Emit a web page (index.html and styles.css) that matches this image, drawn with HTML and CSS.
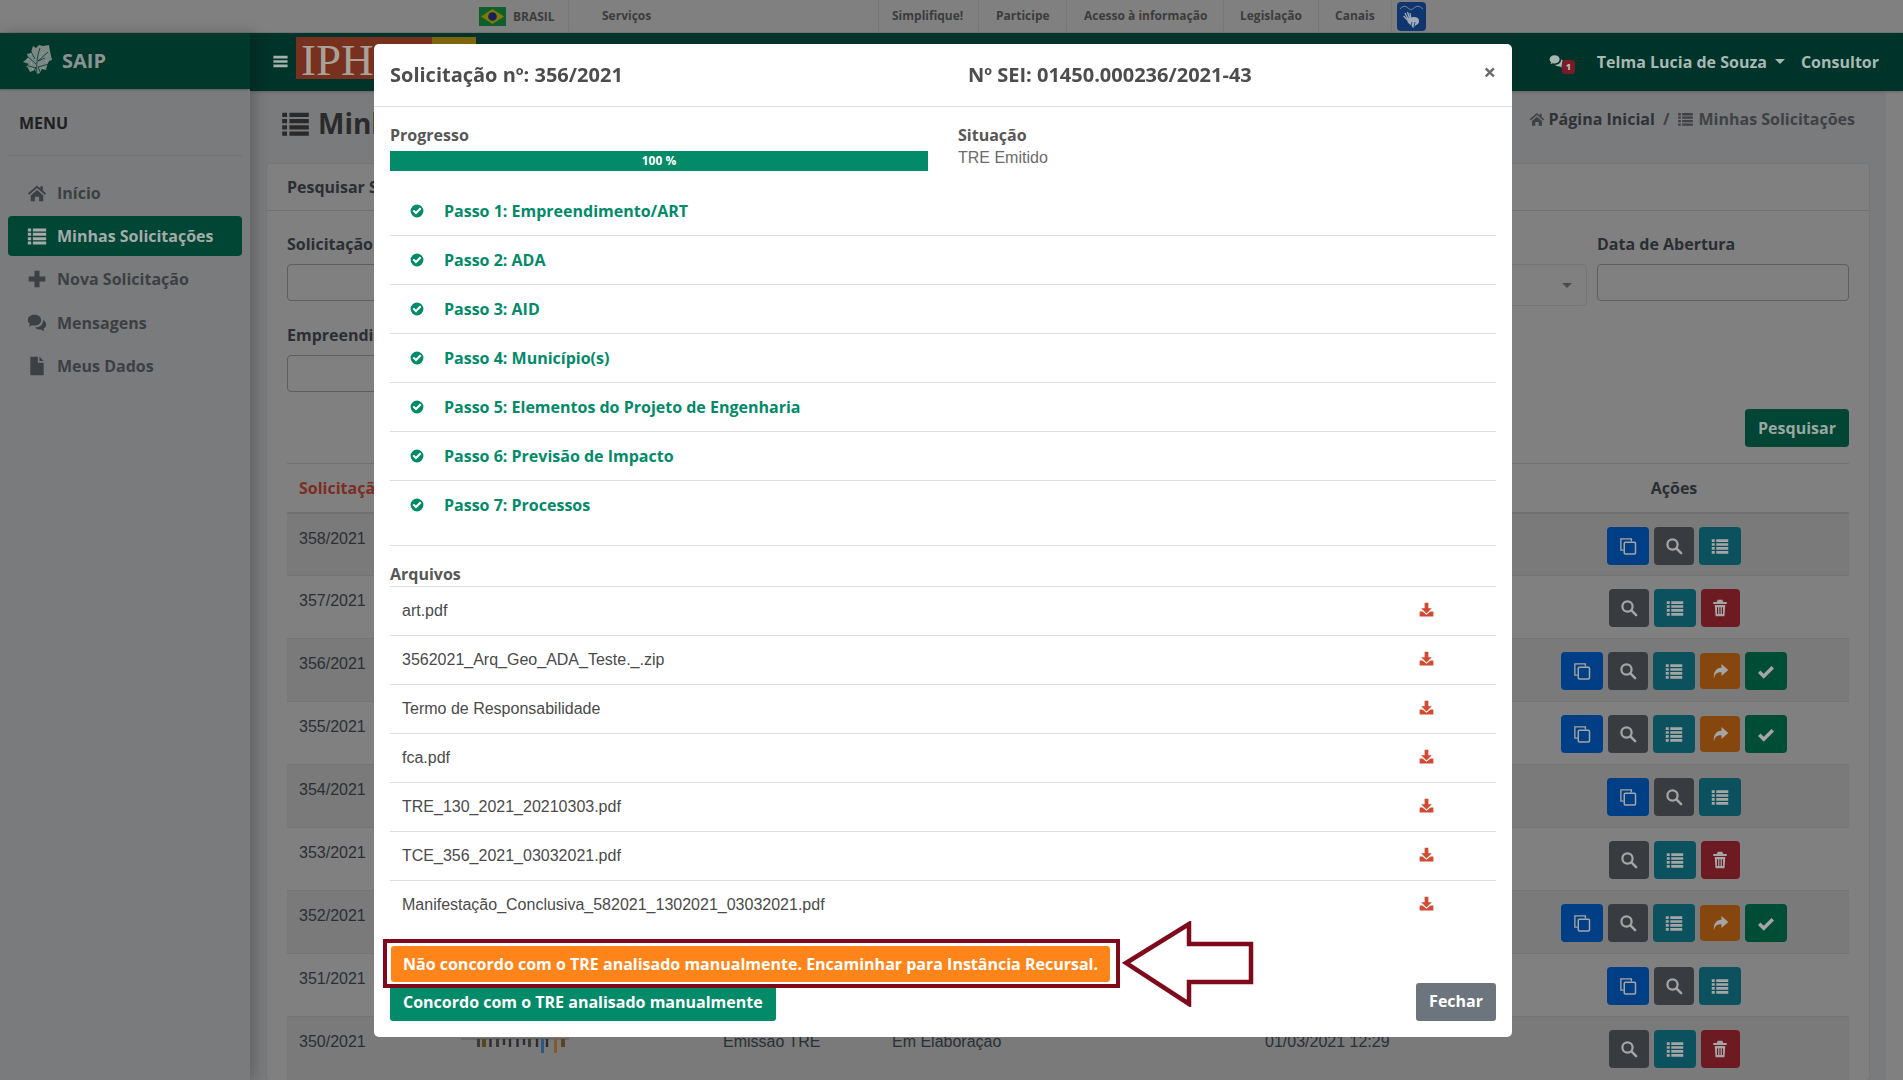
FILE: index.html
```html
<!DOCTYPE html>
<html lang="pt-BR">
<head>
<meta charset="utf-8">
<title>SAIP - Minhas Solicitações</title>
<link rel="stylesheet" href="styles.css">
</head>
<body>
<svg class="sprite" aria-hidden="true">
  <symbol id="i-check-circle" viewBox="0 0 24 24"><path fill-rule="evenodd" d="M12 1a11 11 0 1 0 0 22 11 11 0 0 0 0-22zm-1.8 17L4.4 12.2l2.5-2.5 3.3 3.3 6.9-6.9 2.5 2.5z"/></symbol>
  <symbol id="i-list" viewBox="0 0 24 24"><path d="M1 3h4v3.600H1zM7 3h16v3.600H7zM1 8.200h4v3.600H1zM7 8.200h16v3.600H7zM1 13.400h4V17H1zM7 13.400h16V17H7zM1 18.600h4v3.600H1zM7 18.600h16v3.600H7z"/></symbol>
  <symbol id="i-home" viewBox="0 0 24 24"><path d="M12 3 1 12.500l1.500 1.700L12 6l9.500 8.200 1.500-1.700-4-3.400V4h-3v2.600zM4.500 15 12 8.500l7.500 6.500v7h-5v-5.500h-5V22h-5z"/></symbol>
  <symbol id="i-plus" viewBox="0 0 24 24"><path d="M9 2h6v7h7v6h-7v7H9v-7H2V9h7z"/></symbol>
  <symbol id="i-comments" viewBox="0 0 24 24"><path d="M9 2C4 2 1 5 1 8.500c0 2 1 3.600 2.600 4.800L2 16.500l4-1.800c1 .3 2 .4 3 .4 5 0 8-3 8-6.600S14 2 9 2z"/><path d="M19 8c.2.5.2 1 .2 1.500 0 4.500-4 7.800-9.500 7.800 1.400 1.600 3.600 2.500 6 2.500l1-.1 4 2.300-1-3.300c2-1 3.300-2.600 3.300-4.700 0-2.400-1.500-4.500-4-5.500z"/></symbol>
  <symbol id="i-file" viewBox="0 0 24 24"><path d="M4 1h9v7h7v15H4zM15 1l5 5h-5z"/></symbol>
  <symbol id="i-bars" viewBox="0 0 24 24"><path d="M2 4h20v3.600H2zM2 10.200h20v3.600H2zM2 16.400h20V20H2z"/></symbol>
  <symbol id="i-search" viewBox="0 0 24 24"><circle cx="10" cy="10" r="6.800" fill="none" stroke="currentColor" stroke-width="3"/><path d="M15.200 15.200 21.500 21.500" fill="none" stroke="currentColor" stroke-width="3.400" stroke-linecap="round"/></symbol>
  <symbol id="i-copy" viewBox="0 0 24 24"><path d="M6 17.500H2.500v-15h14V6" fill="none" stroke="currentColor" stroke-width="1.800"/><rect x="7" y="7" width="15" height="15.500" rx="1.500" fill="none" stroke="currentColor" stroke-width="2"/></symbol>
  <symbol id="i-trash" viewBox="0 0 24 24"><path fill-rule="evenodd" d="M9 1h6l1.500 3H21v2.500H3V4h4.500zM5 8h14l-1 15H6zm3 3v9h1.500v-9zm3.200 0v9h1.600v-9zm3.300 0v9H16v-9z"/></symbol>
  <symbol id="i-share" viewBox="0 0 24 24"><path d="M14 2.500 23 10.500l-9 8v-5c-6 0-9 2-10 8.500C2.500 14 7 7.500 14 7.500z"/></symbol>
  <symbol id="i-check" viewBox="0 0 24 24"><path d="M3 13 9 19 21 7" fill="none" stroke="currentColor" stroke-width="4.600"/></symbol>
  <symbol id="i-download" viewBox="0 0 24 24"><path d="M9 1h6v9h5.500L12 18.500 3.500 10H9z"/><path d="M1 15h4.500l6.500 5.500 6.500-5.500H23v8H1z"/></symbol>
</svg>

<div class="page">
  <header class="gov-bar">
    <span class="gov-brasil">
      <svg class="flag" viewBox="0 0 27 19"><rect width="27" height="19" fill="#0d5f2c"/><path d="M13.500 2 25 9.500 13.500 17 2 9.500z" fill="#7f7a08"/><circle cx="13.500" cy="9.500" r="4.300" fill="#17205a"/></svg>
      BRASIL
    </span>
    <a class="gov-link gov-services">Serviços</a>
    <nav class="gov-links">
      <a class="gov-link gov-simplifique">Simplifique!</a>
      <a class="gov-link gov-participe">Participe</a>
      <a class="gov-link gov-acesso">Acesso à informação</a>
      <a class="gov-link gov-legislacao">Legislação</a>
      <a class="gov-link gov-canais">Canais</a>
    </nav>
    <svg class="sign-badge" viewBox="0 0 29 29">
      <rect width="29" height="29" rx="4" fill="#10366f"/>
      <path d="M3 7q4-5 8-1l3 2 3-2q4-4 9 1" fill="none" stroke="#7f8ba0" stroke-width=".9"/>
      <path d="M8 11l3 6M10.500 10l2 6.500M13 11l.8 5.500M6.500 14l4 4" stroke="#a3abb8" stroke-width="1.300" fill="none"/>
      <path d="M10 17q3-2 7-2 5 0 5 4 0 3-3 4l-3 3-2-3q-4-2-4-6z" fill="#a3abb8"/>
      <path d="M15 20l-1 4M18 20l-1 5" stroke="#10366f" stroke-width=".8"/>
    </svg>
  </header>

  <div class="shell">
    <aside class="sidebar">
      <div class="brand">
        <svg class="brand-mark" viewBox="0 0 32 34">
          <path d="M12 2l3 2 3-3 4 1 6-1 1 6 2 9-3 1-2 5-1 4-4-1-2 4-3 1-2-4-5 2-2-4-2-2 3-2-6-2 5-4-1-4 4-1 1-4z" fill="#7c8884"/>
          <path d="M16 33C15 22 16 12 19 4M15 20 5 11M15 24 4 21M17 17 27 8M17 23l11-3M12 31l3-8M20 30l-3-7M9 6l5 9M24 14l-7 3" fill="none" stroke="#00382c" stroke-width=".8"/>
          <path d="M6 15h1M10 19h1M9 10h1M21 9h1M25 17h1M22 24h1M11 25h1M19 13h1" stroke="#a4aeaa" stroke-width="1"/>
        </svg>
        <span class="brand-name">SAIP</span>
      </div>
      <div class="menu-title">MENU</div>
      <ul class="menu">
        <li class="menu-item"><svg class="menu-icon"><use href="#i-home"/></svg>Início</li>
        <li class="menu-item is-active"><svg class="menu-icon"><use href="#i-list"/></svg>Minhas Solicitações</li>
        <li class="menu-item"><svg class="menu-icon"><use href="#i-plus"/></svg>Nova Solicitação</li>
        <li class="menu-item"><svg class="menu-icon"><use href="#i-comments"/></svg>Mensagens</li>
        <li class="menu-item"><svg class="menu-icon"><use href="#i-file"/></svg>Meus Dados</li>
      </ul>
    </aside>

    <div class="workspace">
      <div class="navbar">
        <svg class="nav-burger"><use href="#i-bars"/></svg>
        <div class="iphan"><span class="iphan-name">IPHAN</span><span class="iphan-gold"></span></div>
        <div class="nav-right">
          <span class="nav-chat"><svg class="nav-chat-icon"><use href="#i-comments"/></svg><b class="nav-badge">1</b></span>
          <span class="nav-user">Telma Lucia de Souza<i class="caret"></i></span>
          <span class="nav-role">Consultor</span>
        </div>
      </div>

      <div class="viewport">
        <main class="content">
          <div class="page-head">
            <h1 class="page-title"><svg class="page-title-icon"><use href="#i-list"/></svg>Minhas Solicitações</h1>
            <div class="crumbs">
              <svg class="crumb-icon"><use href="#i-home"/></svg><span class="crumb-strong">Página Inicial</span>
              <span class="crumb-sep">/</span>
              <svg class="crumb-icon crumb-list"><use href="#i-list"/></svg><span>Minhas Solicitações</span>
            </div>
          </div>

          <section class="card">
            <div class="card-head">Pesquisar Solicitações</div>
            <div class="card-body">
              <div class="form-grid">
                <label class="field"><span class="field-label">Solicitação</span><span class="input"></span></label>
                <label class="field"><span class="field-label">Empreendimento</span><span class="input"></span></label>
                <label class="field"><span class="field-label">Situação</span><span class="input input-select"><i class="select-caret"></i></span></label>
                <label class="field"><span class="field-label">Data de Abertura</span><span class="input"></span></label>
                <label class="field field-wide"><span class="field-label">Empreendimento</span><span class="input"></span></label>
              </div>
              <div class="form-actions"><span class="btn-search">Pesquisar</span></div>

              <table class="grid">
                <colgroup><col class="c1"><col class="c2"><col class="c3"><col class="c4"><col class="c5"><col class="c6"></colgroup>
                <thead>
                  <tr><th class="th-sort">Solicitação</th><th>Empreendimento</th><th>Etapa</th><th>Situação</th><th>Data</th><th class="th-actions">Ações</th></tr>
                </thead>
                <tbody>
                  <tr><td>358/2021</td><td></td><td></td><td></td><td></td>
                    <td><div class="acts"><a class="act blue"><svg><use href="#i-copy"/></svg></a><a class="act grey"><svg><use href="#i-search"/></svg></a><a class="act teal"><svg><use href="#i-list"/></svg></a></div></td></tr>
                  <tr><td>357/2021</td><td></td><td></td><td></td><td></td>
                    <td><div class="acts"><a class="act grey"><svg><use href="#i-search"/></svg></a><a class="act teal"><svg><use href="#i-list"/></svg></a><a class="act red"><svg><use href="#i-trash"/></svg></a></div></td></tr>
                  <tr><td>356/2021</td><td></td><td></td><td></td><td></td>
                    <td><div class="acts"><a class="act blue"><svg><use href="#i-copy"/></svg></a><a class="act grey"><svg><use href="#i-search"/></svg></a><a class="act teal"><svg><use href="#i-list"/></svg></a><a class="act orange"><svg><use href="#i-share"/></svg></a><a class="act green"><svg><use href="#i-check"/></svg></a></div></td></tr>
                  <tr><td>355/2021</td><td></td><td></td><td></td><td></td>
                    <td><div class="acts"><a class="act blue"><svg><use href="#i-copy"/></svg></a><a class="act grey"><svg><use href="#i-search"/></svg></a><a class="act teal"><svg><use href="#i-list"/></svg></a><a class="act orange"><svg><use href="#i-share"/></svg></a><a class="act green"><svg><use href="#i-check"/></svg></a></div></td></tr>
                  <tr><td>354/2021</td><td></td><td></td><td></td><td></td>
                    <td><div class="acts"><a class="act blue"><svg><use href="#i-copy"/></svg></a><a class="act grey"><svg><use href="#i-search"/></svg></a><a class="act teal"><svg><use href="#i-list"/></svg></a></div></td></tr>
                  <tr><td>353/2021</td><td></td><td></td><td></td><td></td>
                    <td><div class="acts"><a class="act grey"><svg><use href="#i-search"/></svg></a><a class="act teal"><svg><use href="#i-list"/></svg></a><a class="act red"><svg><use href="#i-trash"/></svg></a></div></td></tr>
                  <tr><td>352/2021</td><td></td><td></td><td></td><td></td>
                    <td><div class="acts"><a class="act blue"><svg><use href="#i-copy"/></svg></a><a class="act grey"><svg><use href="#i-search"/></svg></a><a class="act teal"><svg><use href="#i-list"/></svg></a><a class="act orange"><svg><use href="#i-share"/></svg></a><a class="act green"><svg><use href="#i-check"/></svg></a></div></td></tr>
                  <tr><td>351/2021</td><td></td><td></td><td></td><td></td>
                    <td><div class="acts"><a class="act blue"><svg><use href="#i-copy"/></svg></a><a class="act grey"><svg><use href="#i-search"/></svg></a><a class="act teal"><svg><use href="#i-list"/></svg></a></div></td></tr>
                  <tr><td>350/2021</td>
                    <td class="td-thumb"><svg class="thumb" viewBox="0 0 108 16">
                      <path d="M0 .8h108" stroke="#666" stroke-width="2"/>
                      <path d="M17.500 1v8M36.500 1v8M68.500 1v8" stroke="#3a3a38" stroke-width="3"/>
                      <path d="M23 1v8M102 1v8" stroke="#5a4320" stroke-width="4"/>
                      <path d="M29.500 1v8M43 1v6M49 1v8M56.500 1v8M63 1v6M76 1v8M86 1v8" stroke="#2b2d31" stroke-width="2.400"/>
                      <path d="M81.500 1v14" stroke="#2f5680" stroke-width="3"/>
                      <path d="M94.500 1v14" stroke="#86592a" stroke-width="3"/>
                    </svg></td>
                    <td>Emissão TRE</td><td>Em Elaboração</td><td>01/03/2021 12:29</td>
                    <td><div class="acts"><a class="act grey"><svg><use href="#i-search"/></svg></a><a class="act teal"><svg><use href="#i-list"/></svg></a><a class="act red"><svg><use href="#i-trash"/></svg></a></div></td></tr>
                </tbody>
              </table>
            </div>
          </section>
        </main>
        <div class="scroll-track"></div>
      </div>
    </div>
  </div>
</div>

<div class="modal-layer">
  <div class="modal">
    <div class="modal-head">
      <div class="modal-title">Solicitação nº: 356/2021</div>
      <div class="modal-sei">Nº SEI: 01450.000236/2021-43</div>
      <span class="modal-close">×</span>
    </div>
    <div class="modal-body">
      <div class="status-row">
        <div class="status-progress">
          <div class="block-label">Progresso</div>
          <div class="progress">100 %</div>
        </div>
        <div class="status-state">
          <div class="block-label">Situação</div>
          <div class="state-value">TRE Emitido</div>
        </div>
      </div>
      <ul class="steps">
        <li class="step"><svg class="step-icon"><use href="#i-check-circle"/></svg>Passo 1: Empreendimento/ART</li>
        <li class="step"><svg class="step-icon"><use href="#i-check-circle"/></svg>Passo 2: ADA</li>
        <li class="step"><svg class="step-icon"><use href="#i-check-circle"/></svg>Passo 3: AID</li>
        <li class="step"><svg class="step-icon"><use href="#i-check-circle"/></svg>Passo 4: Município(s)</li>
        <li class="step"><svg class="step-icon"><use href="#i-check-circle"/></svg>Passo 5: Elementos do Projeto de Engenharia</li>
        <li class="step"><svg class="step-icon"><use href="#i-check-circle"/></svg>Passo 6: Previsão de Impacto</li>
        <li class="step"><svg class="step-icon"><use href="#i-check-circle"/></svg>Passo 7: Processos</li>
      </ul>
      <div class="block-label files-label">Arquivos</div>
      <ul class="files">
        <li class="file">art.pdf<svg class="file-icon"><use href="#i-download"/></svg></li>
        <li class="file">3562021_Arq_Geo_ADA_Teste._.zip<svg class="file-icon"><use href="#i-download"/></svg></li>
        <li class="file">Termo de Responsabilidade<svg class="file-icon"><use href="#i-download"/></svg></li>
        <li class="file">fca.pdf<svg class="file-icon"><use href="#i-download"/></svg></li>
        <li class="file">TRE_130_2021_20210303.pdf<svg class="file-icon"><use href="#i-download"/></svg></li>
        <li class="file">TCE_356_2021_03032021.pdf<svg class="file-icon"><use href="#i-download"/></svg></li>
        <li class="file">Manifestação_Conclusiva_582021_1302021_03032021.pdf<svg class="file-icon"><use href="#i-download"/></svg></li>
      </ul>
      <div class="modal-foot">
        <div class="foot-choices">
          <a class="btn btn-orange">Não concordo com o TRE analisado manualmente. Encaminhar para Instância Recursal.</a>
          <a class="btn btn-green">Concordo com o TRE analisado manualmente</a>
        </div>
        <a class="btn btn-close">Fechar</a>
      </div>
    </div>
    <!-- callout around the appeal button -->
    <div class="callout-box"></div>
    <svg class="callout-arrow" viewBox="0 0 132 86"><path d="M4 42 67 3V23H129V61H67V83z" fill="#fff" stroke="#7e0a1c" stroke-width="4.500"/></svg>
  </div>
</div>
</body>
</html>
```
FILE: styles.css
```css
* { box-sizing: border-box; }

html, body { margin: 0; height: 100%; overflow: hidden; }

body {
  font-family: "Open Sans", "Liberation Sans", sans-serif;
  font-size: 16px;
  line-height: 24px;
  color: #2b2e33;
  background: #7a7b7d;
}

ul { list-style: none; margin: 0; padding: 0; }
svg { fill: currentColor; display: block; }
.sprite { position: absolute; width: 0; height: 0; }

.page { height: 1080px; display: flex; flex-direction: column; }

/* government strip */
.gov-bar {
  height: 33px;
  flex: none;
  background: #808080;
  display: flex;
  align-items: stretch;
  padding-left: 479px;
  font-size: 12px;
  font-weight: 700;
  line-height: 32px;
  color: #3c3c3c;
  box-shadow: inset 0 -1px 0 #767676;
}
.gov-brasil { display: flex; align-items: center; gap: 7px; width: 90px; border-right: 1px solid #767676; }
.flag { width: 27px; height: 19px; }
.gov-link { display: block; white-space: nowrap; }
.gov-services { margin-left: 33px; width: 277px; border-right: 1px solid #767676; }
.gov-links { display: flex; }
.gov-link.gov-simplifique { padding: 0 13px; width: 100px; border-right: 1px solid #767676; }
.gov-link.gov-participe { padding: 0 17px; width: 88px; border-right: 1px solid #767676; }
.gov-link.gov-acesso { padding: 0 17px; width: 157px; border-right: 1px solid #767676; }
.gov-link.gov-legislacao { padding: 0 16px; width: 95px; border-right: 1px solid #767676; }
.gov-link.gov-canais { padding: 0 16px; width: 73px; border-right: 1px solid #767676; }
.sign-badge { width: 29px; height: 29px; margin: 2px 0 0 5px; }

.shell { flex: 1; min-height: 0; display: flex; }

/* side menu */
.sidebar {
  width: 250px;
  flex: none;
  background: #7a7b7d;
  box-shadow: 4px 0 14px rgba(0, 0, 0, .22);
  position: relative;
  z-index: 2;
}
.brand {
  height: 56px;
  background: #00382c;
  display: flex;
  align-items: center;
  padding-left: 21px;
  gap: 9px;
  box-shadow: 0 1px 2px rgba(0, 0, 0, .25);
}
.brand-mark { width: 32px; height: 34px; flex: none; }
.brand-name { font-size: 20px; font-weight: 700; color: #8b9391; }
.menu-title {
  margin: 0 8px;
  padding: 22px 11px 20px;
  height: 67px;
  font-size: 16px;
  font-weight: 700;
  color: #202020;
  border-bottom: 1px solid #707173;
}
.menu { padding: 17px 8px 0; }
.menu-item {
  height: 40px;
  margin-bottom: 3px;
  display: flex;
  align-items: center;
  gap: 10px;
  padding-left: 19px;
  border-radius: 4px;
  font-weight: 700;
  color: #3c3f43;
}
.menu-item:nth-child(3) { margin-bottom: 4px; }
.menu-icon { width: 20px; height: 20px; flex: none; }
.menu-item.is-active { background: #014534; color: #a4aba9; }

.workspace { flex: 1; min-width: 0; display: flex; flex-direction: column; }

/* top navigation */
.navbar {
  height: 58px;
  flex: none;
  background: #003329;
  display: flex;
  align-items: center;
  padding-left: 22px;
  box-shadow: 0 1px 3px rgba(0, 0, 0, .2);
  position: relative;
  z-index: 1;
}
.nav-burger { width: 17px; height: 17px; color: #a3b3ae; margin-top: -1px; }
.iphan { display: flex; height: 42px; margin: -8px 0 0 7px; }
.iphan-name {
  width: 136px;
  background: #78301f;
  color: #a8a299;
  font-family: "Liberation Serif", serif;
  font-size: 45px;
  line-height: 46px;
  padding-left: 5px;
  overflow: hidden;
}
.iphan-gold { width: 44px; background: #7f6510; }
.nav-right { margin-left: auto; display: flex; align-items: center; color: #a7b9b4; font-weight: 700; padding-bottom: 1px; }
.nav-chat { position: relative; width: 48px; }
.nav-chat-icon { width: 15px; height: 15px; color: #a7b5b0; }
.nav-badge {
  position: absolute;
  left: 13px;
  top: 6px;
  width: 13px;
  height: 14px;
  border-radius: 3px;
  background: #7a1b28;
  color: #b9b9b9;
  font-size: 9px;
  line-height: 14px;
  text-align: center;
}
.nav-user { display: flex; align-items: center; }
.caret {
  margin-left: 8px;
  border-left: 5px solid transparent;
  border-right: 5px solid transparent;
  border-top: 5px solid #a7b9b4;
}
.nav-role { margin: 0 24px 0 16px; }

.viewport { flex: 1; min-height: 0; display: flex; }
.scroll-track { width: 17px; flex: none; background: #808080; }
.content { flex: 1; min-width: 0; padding: 0 16px; overflow: hidden; }

.page-head { height: 72px; display: flex; justify-content: space-between; }
.page-title {
  margin: 14px 0 0 15px;
  display: flex;
  align-items: center;
  gap: 8px;
  height: 36px;
  font-size: 28px;
  font-weight: 700;
  color: #2a2a2a;
  white-space: nowrap;
}
.page-title-icon { width: 29px; height: 29px; }
.crumbs {
  display: flex;
  align-items: center;
  height: 24px;
  margin: 16px 15px 0 0;
  font-weight: 700;
  color: #3f4145;
  white-space: nowrap;
}
.crumb-icon { width: 16px; height: 16px; margin-right: 4px; }
.crumb-strong { color: #2f3236; }
.crumb-sep { margin: 0 8px; }
.crumb-list { width: 17px; }

.card { background: #808080; border: 1px solid #757575; border-radius: 4px; }
.card-head {
  height: 47px;
  padding: 11px 20px;
  font-weight: 700;
  color: #2b2e33;
  border-bottom: 1px solid #707070;
}
.card-body { padding: 21px 20px 0; }

/* search form */
.form-grid {
  display: grid;
  grid-template-columns: 300px 1fr 300px 252px;
  column-gap: 10px;
  row-gap: 17px;
  align-items: start;
}
.field { display: block; }
.field-wide { grid-column: 1 / span 2; }
.field-label { display: block; height: 32px; font-weight: 700; color: #2b2e33; white-space: nowrap; }
.input { display: block; height: 37px; border: 1px solid #5d5e60; border-radius: 4px; }
.input-select { height: 42px; border-color: #757575; position: relative; }
.select-caret {
  position: absolute;
  right: 14px;
  top: 18px;
  border-left: 5px solid transparent;
  border-right: 5px solid transparent;
  border-top: 5px solid #4a4a4a;
}
.form-actions { display: flex; justify-content: flex-end; margin-top: 17px; height: 54px; }
.btn-search {
  height: 38px;
  width: 104px;
  background: #014534;
  color: #9aa6a2;
  border-radius: 4px;
  font-weight: 700;
  text-align: center;
  line-height: 38px;
}

/* listing */
.grid { width: 100%; border-collapse: collapse; table-layout: fixed; font-family: "Liberation Sans", sans-serif; }
.c1 { width: 170px; } .c2 { width: 254px; } .c3 { width: 169px; } .c4 { width: 373px; } .c5 { width: 246px; } .c6 { width: 350px; }
.grid th {
  height: 49px;
  padding: 0 12px;
  text-align: left;
  font-family: "Open Sans", sans-serif;
  font-weight: 700;
  color: #2b2e33;
  border-top: 1px solid #707070;
  border-bottom: 2px solid #707070;
  white-space: nowrap;
}
.grid th.th-sort { color: #7c2d20; }
.grid th.th-actions { text-align: center; }
.grid td {
  height: 63px;
  padding: 13px 12px 0;
  vertical-align: top;
  color: #2b2f35;
  border-top: 1px solid #747474;
}
.grid tbody tr:nth-child(odd) td { background: #7a7a7a; }
.grid td.td-thumb { padding: 0 0 0 4px; }
.thumb { width: 108px; height: 16px; margin-top: 21px; }
.acts { display: flex; justify-content: center; gap: 5px; }
.act {
  display: flex;
  align-items: center;
  justify-content: center;
  width: 42px;
  height: 38px;
  border-radius: 4px;
  color: #a5a5a5;
}
.act svg { width: 18px; height: 18px; }
.act.blue { background: #003f86; }
.act.grey { width: 40px; background: #383b3f; }
.act.teal { background: #0c525e; }
.act.red { width: 39px; background: #6e1a22; }
.act.orange { width: 40px; height: 36px; margin-top: 1px; background: #85470e; }
.act.green { background: #004d35; }

/* request dialog */
.modal-layer {
  position: fixed;
  inset: 0;
  display: flex;
  justify-content: center;
  align-items: flex-start;
  padding: 44px 17px 0 0;
  z-index: 10;
}
.modal {
  position: relative;
  width: 1138px;
  height: 993px;
  background: #fff;
  border-radius: 5px;
  color: #4d4d4d;
}
.modal-head {
  height: 63px;
  position: relative;
  display: flex;
  align-items: center;
  border-bottom: 1px solid #dedede;
  padding: 0 16px 1px;
  font-size: 20px;
  font-weight: 700;
}
.modal-title { width: 578px; white-space: nowrap; }
.modal-sei { white-space: nowrap; }
.modal-close {
  position: absolute;
  right: 16px;
  top: 12px;
  font-size: 22px;
  font-weight: 700;
  line-height: 30px;
  color: #6a6a6a;
}
.modal-body { padding: 16px 16px 0; }
.status-row { display: flex; height: 48px; margin-bottom: 16px; }
.status-progress { width: 538px; }
.status-state { margin-left: 30px; }
.block-label { font-weight: 700; height: 28px; color: #575757; }
.progress {
  height: 20px;
  background: #028a69;
  color: #fff;
  font-size: 12px;
  font-weight: 700;
  line-height: 20px;
  text-align: center;
}
.state-value { font-family: "Liberation Sans", sans-serif; margin-top: -5px; color: #6b6b6b; }

.steps { height: 359px; border-bottom: 1px solid #dedede; }
.step {
  height: 49px;
  display: flex;
  align-items: center;
  padding-left: 20px;
  font-weight: 700;
  color: #028a69;
  border-bottom: 1px solid #dedede;
}
.step:last-child { border-bottom-color: transparent; }
.step-icon { width: 14px; height: 14px; margin-right: 20px; flex: none; }

.files-label { height: 24px; margin-top: 16px; }
.files { font-family: "Liberation Sans", sans-serif; color: #4a4a4a; }
.file {
  height: 49px;
  display: flex;
  align-items: center;
  justify-content: space-between;
  padding: 0 50px 1px 12px;
  border-top: 1px solid #dedede;
}
.file-icon { width: 15px; height: 15px; margin: -2px 12px 0 0; color: #d24a32; }

.modal-foot {
  margin-top: 17px;
  display: flex;
  justify-content: space-between;
  align-items: flex-end;
}
.foot-choices { display: flex; flex-direction: column; align-items: flex-start; gap: 2px; }
.btn {
  display: block;
  height: 37px;
  padding: 0 13px;
  border-radius: 3px;
  color: #fff;
  font-weight: 700;
  line-height: 36px;
  white-space: nowrap;
}
.btn-orange { height: 36px; margin-left: 1px; padding: 0 12px; background: #ff851b; }
.btn-green { background: #028a69; }
.btn-close { height: 38px; background: #6c757d; line-height: 37px; }

.callout-box {
  position: absolute;
  left: 9px;
  top: 895px;
  width: 737px;
  height: 49px;
  border: 4px solid #7e0a1c;
  pointer-events: none;
}
.callout-arrow { position: absolute; left: 748px; top: 877px; width: 132px; height: 86px; }
```
